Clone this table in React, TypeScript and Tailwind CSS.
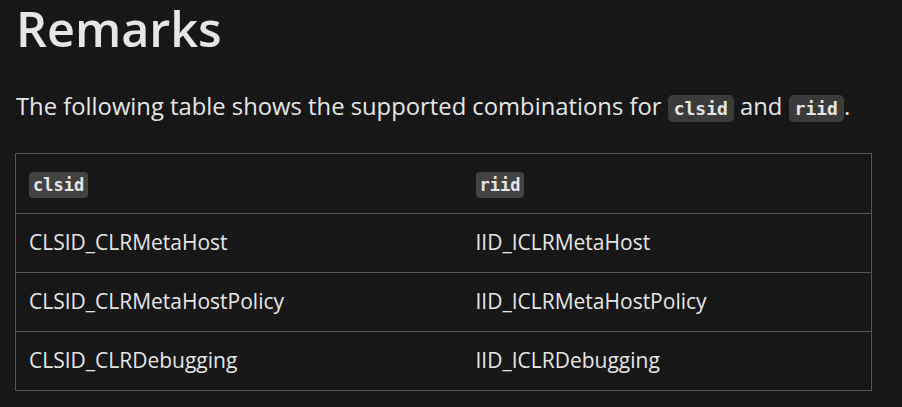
const rows = [
  ["CLSID_CLRMetaHost", "IID_ICLRMetaHost"],
  ["CLSID_CLRMetaHostPolicy", "IID_ICLRMetaHostPolicy"],
  ["CLSID_CLRDebugging", "IID_ICLRDebugging"],
];

const mono = { fontFamily: '"DejaVu Sans Mono", "Liberation Mono", monospace' };

export default function App() {
  return (
    <div
      className="min-h-[407px] w-full bg-[#171717] px-[16px] text-[#e6e6e6]"
      style={{ fontFamily: '"Open Sans", "Noto Sans", sans-serif' }}
    >
      <h1 className="text-[48.5px] leading-[56px] font-semibold">Remarks</h1>
      <p className="mt-[34px] text-[23.8px] leading-[32px]">
        The following table shows the supported combinations for{" "}
        <code className="rounded-[5px] bg-[#3b3b3b] px-[6px] py-[3px] text-[18px] font-semibold" style={mono}>
          clsid
        </code>{" "}
        and{" "}
        <code className="rounded-[5px] bg-[#3b3b3b] px-[6px] py-[3px] text-[18px] font-semibold" style={mono}>
          riid
        </code>
        .
      </p>
      <table className="mt-[28px] w-[857px] -ml-px border-collapse border border-[#555] text-[21px]">
        <thead>
          <tr className="h-[60px] border-b border-[#555]">
            <th className="w-[460px] pl-[13px] text-left">
              <code className="rounded-[4px] bg-[#424242] px-[4px] py-[3px] text-[17px] font-bold" style={mono}>
                clsid
              </code>
            </th>
            <th className="text-left">
              <code className="rounded-[4px] bg-[#424242] px-[4px] py-[3px] text-[17px] font-bold" style={mono}>
                riid
              </code>
            </th>
          </tr>
        </thead>
        <tbody>
          {rows.map(([a, b]) => (
            <tr key={a} className="h-[59px] border-b border-[#555]">
              <td className="pl-[13px]">{a}</td>
              <td>{b}</td>
            </tr>
          ))}
        </tbody>
      </table>
    </div>
  );
}
